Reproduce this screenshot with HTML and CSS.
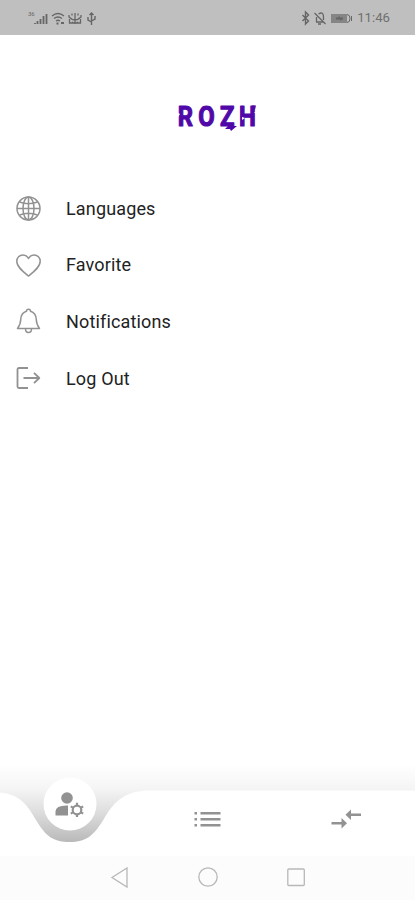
FILE: index.html
```html
<!DOCTYPE html>
<html lang="en">
  <head>
    <meta charset="utf-8">
    <meta name="viewport" content="width=device-width, initial-scale=1">
    <title>Rozh</title>
    <link rel="stylesheet" href="styles.css">
  </head>
  <body>
    <div class="screen">
      <header class="status-bar">
        <svg class="status-left" width="70" height="16" viewBox="0 0 70 16">
          <text x="0" y="6" class="network">36</text>
          <path d="M7 14v-1M9.500 14v-3M12.500 14V9M15.500 14V6M18.500 14V4" stroke-width="1.800"/>
          <path d="M24 6q6-5 12 0M26 8.500q4-3 8 0M28 11q2-1.500 4 0" stroke-width="1.300"/>
          <path d="M28.500 13.500h2M33 13h3" stroke-width="2"/>
          <path d="M41 5v2q6 6 12 0V5M41.500 9v4h4M52.500 9v4h-4M44 5.500V3.500M47 14V3M50 5.500V3.500M44 12q3 2 6 0" stroke-width="1.300"/>
          <path d="M63.500 15V3M60 7v3l3.500 2M67 6v3l-3.500 2M61.500 5l2-2 2 2" stroke-width="1.400"/>
        </svg>
        <div class="status-right">
          <svg width="52" height="16" viewBox="0 0 52 16">
            <path d="M2.500 5l6 6-3 3V2l3 3-6 6" stroke-width="1.400"/>
            <path d="M14.500 3l11 11M16 12h7M16.500 12V7M18.500 4q5-3 5 3v3M18 14h3" stroke-width="1.300"/>
            <rect x="31" y="4" width="16" height="9" class="battery"/>
            <path d="M36 8.500h7M38.500 7l3 3" stroke-width="1.800"/>
            <path d="M47 4.500q3 0 3 4t-3 4" stroke-width="1"/>
            <path d="M51.500 6v5" stroke-width="1"/>
          </svg>
          <span class="clock">11:46</span>
        </div>
      </header>

      <main class="content">
        <svg class="logo" width="90" height="36" viewBox="0 0 90 36">
          <text x="1 25 50.500 73" y="27.500" transform="scale(.85 1)">ROZH</text>
          <path class="logo-bolt" d="M49 24.500l7 .5-1 2h5l-6 5-1-2h-5l3-3zM75 6.500h4l-1 4h-3z"/>
          <path class="logo-cut" d="M1 14l2 1-2 3zM65 18l3 1-3 2zM80 12l-3 1.500 3 1.500z"/>
        </svg>

        <nav class="menu">
          <a class="menu-item">
            <svg class="icon" viewBox="0 0 26 26">
              <circle cx="13.500" cy="13.500" r="11.500"/>
              <ellipse cx="13.500" cy="13.500" rx="5.500" ry="11.500"/>
              <path d="M13.500 2v23M2 13.500h23M4.500 7q9 3.500 18 0M4.500 20q9-3.500 18 0"/>
            </svg>
            <span>Languages</span>
          </a>
          <a class="menu-item">
            <svg class="icon" viewBox="0 0 26 26">
              <path d="M13.500 24C8.500 20 1.800 15 1.800 9.300 1.800 5.500 4.500 3 7.800 3c2.400 0 4.500 1.300 5.700 3.500C14.700 4.300 16.800 3 19.200 3c3.300 0 6 2.500 6 6.300 0 5.700-6.700 10.700-11.700 14.700z"/>
            </svg>
            <span>Favorite</span>
          </a>
          <a class="menu-item">
            <svg class="icon" viewBox="0 0 26 26">
              <path d="M11.500 3.200a2 2 0 0 1 4 0c3.600 1 5.500 4 5.700 7.800.2 5 1.300 7 3.300 9.500h-22c2-2.500 3.100-4.500 3.300-9.500.2-3.800 2.100-6.800 5.700-7.800zM10.500 21c0 4.700 6 4.700 6 0"/>
            </svg>
            <span>Notifications</span>
          </a>
          <a class="menu-item">
            <svg class="icon" viewBox="0 0 26 26">
              <path d="M13 3H4Q2.500 3 2.500 4.500v17Q2.500 23 4 23h9M8.500 13h16M19 7.800l5.300 5.200-5.300 5.200" stroke-width="1.800"/>
            </svg>
            <span>Log Out</span>
          </a>
        </nav>
      </main>

      <footer class="tab-bar">
        <svg class="tab-shape" width="415" height="91" viewBox="0 0 415 91">
          <defs>
            <linearGradient id="shade" x1="0" y1="0" x2="0" y2="78" gradientUnits="userSpaceOnUse">
              <stop offset="0" stop-color="#fff"/>
              <stop offset=".3" stop-color="#f5f5f5"/>
              <stop offset=".6" stop-color="#dedede"/>
              <stop offset="1" stop-color="#b8b8b8"/>
            </linearGradient>
          </defs>
          <rect width="415" height="91" fill="url(#shade)"/>
          <path d="M0 27.500C20 29 28 41 36 55c10 17 18 22 34 22s24-6 35-25c10-17 22-26.500 44-26.500h266V91H0z" fill="#fff"/>
          <circle cx="70" cy="39" r="26.500" fill="#fff"/>
        </svg>
        <div class="tabs">
          <a class="tab active">
            <svg width="30" height="26" viewBox="0 0 30 26">
              <circle cx="13" cy="7" r="5.800"/>
              <path d="M1.500 24.500v-4q0-6 11-6H14v10z"/>
              <circle cx="23" cy="19" r="4.300" class="gear"/>
              <path d="M23 11.800v3M23 23.200v2.800M16.800 15.400l2.600 1.500M26.600 21.100l2.600 1.500M29.200 15.400l-2.600 1.500M19.400 21.100l-2.600 1.500" class="gear"/>
            </svg>
          </a>
          <a class="tab">
            <svg width="28" height="18" viewBox="0 0 28 18">
              <path d="M1.500 2H4v2.500H1.500zM7.500 2h20v2.500h-20zM1.500 8H4v2.500H1.500zM7.500 8h20v2.500h-20zM1.500 14H4v2.500H1.500zM7.500 14h20v2.500h-20z"/>
            </svg>
          </a>
          <a class="tab">
            <svg width="30" height="20" viewBox="0 0 30 20">
              <path d="M.5 13h10V9l5.500 5.300-5.500 5.200v-4H.5zM30 4.500H20v-4l-5.500 5.200L20 11V7h10z"/>
            </svg>
          </a>
        </div>
      </footer>

      <div class="system-nav">
        <svg width="20" height="22" viewBox="0 0 20 22"><path d="M17 1v19L2 10.500z"/></svg>
        <svg width="20" height="22" viewBox="0 0 20 22"><circle cx="10" cy="10" r="9.200"/></svg>
        <svg width="20" height="22" viewBox="0 0 20 22"><rect x="1.800" y="2" width="16.500" height="16.500" rx="1"/></svg>
      </div>
    </div>
  </body>
</html>
```

FILE: styles.css
```css
* {
  box-sizing: border-box;
  margin: 0;
  padding: 0;
}

body {
  background: #fff;
  font-family: Roboto, sans-serif;
}

svg {
  display: block;
}

.screen {
  display: flex;
  flex-direction: column;
  height: 900px;
  overflow: hidden;
}

/* Status bar */
.status-bar {
  display: flex;
  justify-content: space-between;
  align-items: center;
  height: 35px;
  padding: 0 25px 0 28px;
  background: #bfbfbf;
}

.status-bar svg {
  fill: none;
  stroke: #666;
}

.status-bar .network {
  font-size: 6px;
  fill: #666;
  stroke: none;
}

.status-bar .battery {
  fill: #858585;
  stroke: none;
}

.status-right {
  display: flex;
  align-items: center;
  gap: 5px;
}

.clock {
  font-size: 13.2px;
  color: #707070;
}

/* Logo and menu */
.content {
  flex: 1;
}

.logo {
  margin: 64px auto 0 177px;
}

.logo text {
  font-size: 28px;
  font-weight: 700;
  fill: #5009a8;
  stroke: #5009a8;
  stroke-width: 1.2;
  stroke-linejoin: round;
}

.logo-bolt {
  fill: #5009a8;
}

.logo-cut {
  fill: #fff;
}

.menu {
  margin-top: 45px;
}

.menu-item {
  display: flex;
  align-items: center;
  gap: 25px;
  height: 56.6px;
  padding-left: 15px;
  font-size: 18px;
  letter-spacing: 0.15px;
  color: #222;
}

.icon {
  width: 26px;
  height: 26px;
  fill: none;
  stroke: #929292;
  stroke-width: 1.5;
  stroke-linejoin: round;
}

/* Bottom tabs */
.tab-bar {
  display: grid;
  height: 91px;
}

.tab-shape,
.tabs {
  grid-area: 1 / 1;
}

.tabs {
  display: grid;
  grid-template-columns: repeat(3, 1fr);
  padding-top: 17px;
}

.tab {
  display: flex;
  justify-content: center;
  align-items: center;
  fill: #929292;
}

.tab.active {
  padding-bottom: 30px;
}

.gear {
  fill: none;
  stroke: #929292;
  stroke-width: 2.2;
}

/* Android navigation */
.system-nav {
  display: flex;
  justify-content: center;
  align-items: center;
  gap: 68px;
  height: 44px;
  background: #fcfcfc;
}

.system-nav svg {
  fill: none;
  stroke: #b8b8b8;
  stroke-width: 1.3;
}
```
